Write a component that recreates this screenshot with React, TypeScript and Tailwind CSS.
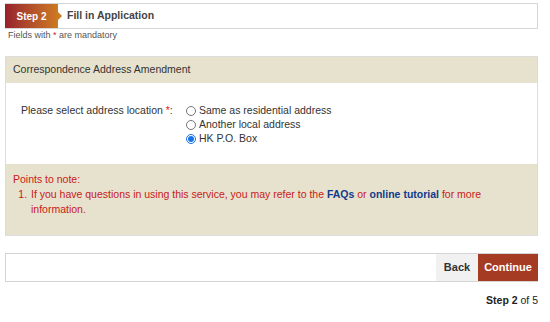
import { useState } from "react";

const font = { fontFamily: '"Liberation Sans", Arial, sans-serif' };

function StepHeader() {
  return (
    <div className="flex h-[26px] items-stretch border border-l-0 border-[#d6d6d6] bg-white">
      <div className="relative flex w-[53px] items-center justify-center bg-gradient-to-r from-[#97202a] to-[#cc7a22] text-[10px] font-bold text-white">
        Step 2
        <span className="absolute right-[-4px] top-1/2 h-0 w-0 -translate-y-1/2 border-y-[4px] border-l-[4px] border-y-transparent border-l-[#cc7a22]" />
      </div>
      <div className="flex items-center pl-[9px] text-[10.5px] font-bold text-[#444]">Fill in Application</div>
    </div>
  );
}

export default function App() {
  const [choice, setChoice] = useState("po");

  const options = [
    { id: "same", label: "Same as residential address" },
    { id: "local", label: "Another local address" },
    { id: "po", label: "HK P.O. Box" },
  ];

  return (
    <div className="min-h-[322px] w-[550px] bg-white pl-[5px] pr-[12px] pt-[3px]" style={font}>
      <StepHeader />
      <p className="mt-[1px] pl-[3px] text-[9px] leading-[11px] text-[#555]">
        Fields with <span className="text-[#d22]">*</span> are mandatory
      </p>

      {/* Amendment card */}
      <div className="mt-[15px] border border-[#dcdcdc]">
        <div className="flex h-[26px] items-center bg-[#e7e2cd] pl-[7px] text-[10.5px] text-[#333]">
          Correspondence Address Amendment
        </div>
        <div className="flex bg-white pb-[18px] pl-[15px] pt-[19px] text-[10.5px] text-[#333]">
          <div className="w-[165px] pt-[1px]">
            Please select address location <span className="text-[#d22]">*</span>:
          </div>
          <div className="flex flex-col pt-[2px]">
            {options.map((o) => (
              <label key={o.id} className="flex h-[14px] items-center gap-[3px]">
                <input
                  type="radio"
                  name="loc"
                  checked={choice === o.id}
                  onChange={() => setChoice(o.id)}
                  className="m-0 h-[10px] w-[10px] accent-[#1a73e8]"
                />
                {o.label}
              </label>
            ))}
          </div>
        </div>
        <div className="bg-[#e7e2cd] pb-[18px] pl-[7px] pr-[10px] pt-[8px] text-[10.5px] leading-[15px] text-[#c8201a]">
          <p>Points to note:</p>
          <ol className="list-decimal pl-[17px]">
            <li className="pl-[1px]">
              If you have questions in using this service, you may refer to the{" "}
              <a className="font-bold text-[#123a8c]">FAQs</a> or{" "}
              <a className="font-bold text-[#123a8c]">online tutorial</a> for more information.
            </li>
          </ol>
        </div>
      </div>

      {/* Action bar */}
      <div className="mt-[17px] flex h-[29px] justify-end border border-r-0 border-[#d4d4d4] bg-white">
        <button className="w-[42px] bg-[#f1f1f1] text-[11px] font-bold text-[#333]">Back</button>
        <button className="w-[60px] bg-[#a63b24] text-[11px] font-bold text-white">Continue</button>
      </div>

      <p className="mt-[11px] text-right text-[10.5px] text-[#222]">
        <span className="font-bold">Step 2</span> of 5
      </p>
    </div>
  );
}
